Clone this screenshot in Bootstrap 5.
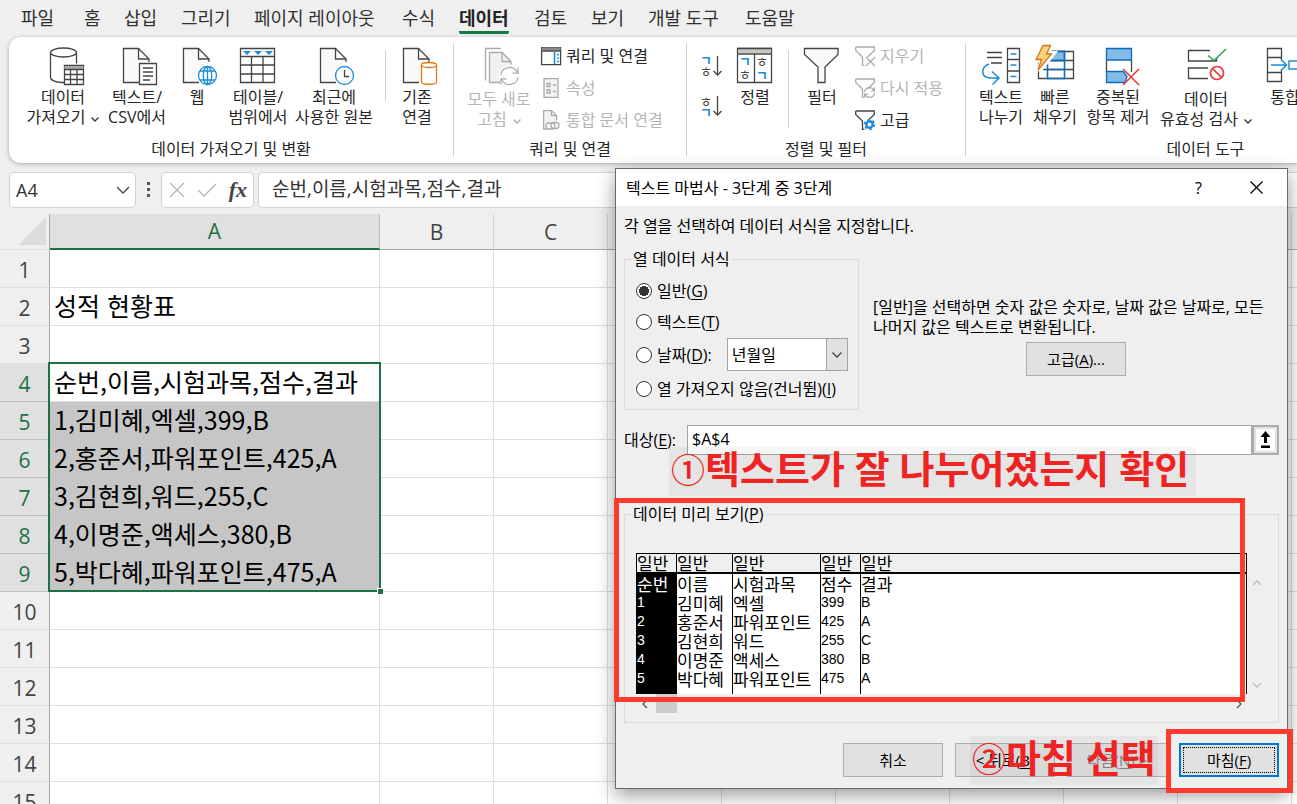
<!DOCTYPE html>
<html lang="ko">
<head>
<meta charset="utf-8">
<meta name="viewport" content="width=device-width, initial-scale=1">
<title>텍스트 마법사</title>
<link href="https://cdn.jsdelivr.net/npm/bootstrap@5.3.0/dist/css/bootstrap.min.css" rel="stylesheet">
<style>
  :root { --chrome: #efefef; --line: #dedede; --green: #1e7145; --mark-red: #ff3b30; }
  body { font-family: "Open Sans", "Noto Sans CJK KR", sans-serif; font-size: 16px; line-height: 20px; color: #262626; background: var(--chrome); }
  svg { display: block; overflow: visible; fill: none; stroke-width: 1.3; flex: none; }
  button { color: inherit; }
  u { text-underline-offset: 2px; }

  /* menu tabs */
  .tabs { display: grid; grid-template-columns: 63px 40px 57px 73px 148px 57px 75px 57px 57px 97px auto; height: 37px; padding: 6px 0 3px 21px; font-size: 18px; line-height: 25px; }
  .tabs a { color: #303030; text-decoration: none; white-space: nowrap; justify-self: start; border-bottom: 3px solid transparent; }
  .tabs a.on { font-weight: 700; color: #222; border-color: #107c41; border-radius: 2px; }

  /* ribbon */
  .ribbon { height: 126px; margin-left: 9px; background: #fff; border-radius: 12px 0 0 12px; box-shadow: 0 1px 4px rgba(0,0,0,.3); overflow: hidden; padding-top: 6px; padding-bottom: 7px; }
  .grp { flex: none; border-right: 1px solid #d0d0d0; }
  .grp-name { text-align: center; line-height: 14px; }
  .g1 { width: 445px; } .g2 { width: 233px; } .g3 { width: 279px; } .g4 { width: 480px; }
  .big { flex: none; align-self: flex-start; border: 0; background: none; padding: 3px 0 0; white-space: nowrap; line-height: 20px; text-align: center; }
  .big svg { width: 40px; height: 40px; margin: 0 auto 1px; }
  .low { padding-top: 5px; }
  .w44 { width: 44px; } .w54 { width: 54px; } .w66 { width: 66px; } .w70 { width: 70px; } .w82 { width: 82px; }
  .rule { width: 1px; height: 51px; background: #d0d0d0; margin: 7px 9px 0; }
  .rule.tall { height: 78px; margin: 7px 11px 0 1px; }
  .off { color: #b5b5b5; }
  .sm { border: 0; background: none; padding: 0; display: flex; align-items: center; gap: 5px; height: 32px; white-space: nowrap; }
  .lst { margin-top: -3px; }
  .big svg.chev { display: inline-block; width: 8px; height: 8px; margin: 0 0 0 6px; }
  .jamo { font-family: "Noto Sans CJK KR", sans-serif; stroke: none; fill: #444; }
  .jamo.b { fill: #1e8bd8; font-weight: 700; }

  /* formula bar */
  .fbar { height: 51px; padding: 9px 0 6px 9px; }
  .fbox { background: #fff; border: 1px solid #d4d4d4; border-radius: 5px; }
  .namebox { width: 127px; padding: 0 5px 0 6px; }
  .namebox input { border: 0; width: 80px; padding: 0; font-size: 18px; color: #333; }
  .tools { width: 93px; padding: 0 6px 0 7px; }
  .fx { font: italic 700 22px/28px "Liberation Serif", serif; color: #444; }
  .formula { border-right: 0; border-radius: 5px 0 0 5px; padding: 0 13px 2px; font-size: 19px; color: #333; min-width: 0; }

  /* sheet */
  .sheet { overflow: hidden; min-height: 0; }
  .sheet table { table-layout: fixed; width: 1406px; border-collapse: separate; border-spacing: 0; background: #fff; }
  .sheet th { font-weight: 400; text-align: center; font-size: 21px; color: #444; background: var(--chrome); padding: 0; }
  .sheet thead th { height: 35px; line-height: 34px; border-bottom: 1px solid #a8a8a8; border-right: 1px solid #d4d4d4; }
  .sheet thead th:first-child { border-right-color: #a8a8a8; border-bottom-color: var(--line); }
  .sheet thead th.on { background: #e0e0e0; color: var(--green); border-bottom: 2px solid var(--green); border-right-color: #b8b8b8; }
  .sheet tbody th { border-right: 1px solid #a8a8a8; border-bottom: 1px solid var(--line); padding-top: 3px; }
  .sheet tbody th.on { background: #e0e0e0; color: var(--green); border-bottom-color: #c0c0c0; }
  .sheet tbody td { height: 38px; padding: 0 0 2px 4px; line-height: 35px; border-right: 1px solid var(--line); border-bottom: 1px solid var(--line); font-family: "Noto Sans CJK KR", sans-serif; font-size: 25px; color: #000; white-space: nowrap; position: relative; }
  .sheet td.sel { background: #c6c6c6; border-color: #c6c6c6; }
  .corner { width: 27px; height: 27px; margin: 0 3px 0 auto; background: linear-gradient(135deg, transparent 50%, #dcdcdc 50%); }
  .range { position: absolute; z-index: 1; top: -2px; left: -2px; right: -2px; height: 230px; border: 2px solid var(--green); }
  .range::after { content: ""; position: absolute; right: -4px; bottom: -4px; width: 6px; height: 6px; background: var(--green); border: 1px solid #fff; border-width: 1px 0 0 1px; }

  /* wizard window */
  .wizard { position: absolute; z-index: 5; top: 168px; left: 615px; width: 673px; background: var(--chrome); border: 1px solid #6a6a6a; box-shadow: 0 6px 18px rgba(0,0,0,.4); color: #000; }
  .wizard .bar { height: 37px; background: #fff; padding: 0 24px 0 10px; }
  .wizard .bar button { border: 0; background: none; padding: 0; }
  .wiz-body { padding: 10px 8px 11px; }
  .frame { border: 1px solid #dadada; position: relative; margin: 0; }
  .frame legend { float: none; width: auto; margin: 0 0 0 6px; padding: 0 2px; font-size: 16px; line-height: 20px; }
  .fmt { width: 235px; height: 161px; }
  .opts { display: grid; grid-template-rows: 30px 31px 35px 34px; align-items: center; padding-left: 11px; margin-top: 7px; white-space: nowrap; }
  .opts input { appearance: none; width: 16px; height: 16px; margin: 0 5px 0 0; border: 1px solid #333; border-radius: 50%; background: #fff; flex: none; }
  .opts input:checked { background: radial-gradient(circle, #333 0 5px, #fff 5px); }
  .pick { width: 121px; height: 33px; margin-left: 15px; position: relative; }
  .pick select { appearance: none; width: 100%; height: 100%; border: 1px solid #a5a5a5; border-radius: 0; background: #fff; padding: 0 4px; color: #000; }
  .pick span { position: absolute; right: 0; top: 0; bottom: 0; width: 22px; border: 1px solid #a5a5a5; background: #e1e1e1; pointer-events: none; }
  .pb { width: 100px; height: 34px; border: 1px solid #adadad; background: #e1e1e1; padding: 0; font-size: 15px; }
  .pb.main { border: 2px solid #0078d7; outline: 1px dotted #000; outline-offset: -5px; }
  .pb:disabled { color: #888; }
  .hint { margin-left: 14px; width: 406px; white-space: nowrap; }
  .dest { height: 30px; }
  .dest label { width: 63px; }
  .dest input { border: 1px solid #a5a5a5; background: #fff; padding: 0 4px 2px; min-width: 0; color: #000; }
  .dest button { width: 27px; border: 2px solid #adadad; background: #e1e1e1; padding: 2px; }
  .dest svg { background: #fff; }
  .prev { height: 219px; }
  .prev-in { padding: 29px 11px 0; }
  .prev table { table-layout: fixed; width: 100%; border: 1px solid #000; border-bottom: 0; border-collapse: separate; border-spacing: 0; background: #fff; font: 17px/19px "Noto Sans CJK KR", sans-serif; }
  .prev th, .prev td { padding: 0; height: 19px; font-weight: 400; border-left: 1px solid #000; white-space: nowrap; }
  .prev th { background: var(--chrome); border-bottom: 2px solid #000; line-height: 18px; height: 20px; }
  .prev th:first-child, .prev td:first-child { border-left: 0; }
  .prev tbody td:first-child { background: #000; color: #fff; }
  .prev tbody tr:last-child td { height: 25px; vertical-align: top; }
  .prev .lat { font-family: "Liberation Sans", sans-serif; font-size: 14px; }
  .vbar { width: 20px; padding: 26px 0 5px; }
  .hbar { height: 19px; margin-right: 20px; padding: 0 4px 0 5px; }
  .hbar i { width: 21px; height: 19px; background: #cdcdcd; margin-left: 8px; }

  /* red call-outs over the window */
  .ring { position: absolute; border: 5px solid var(--mark-red); pointer-events: none; }
  .ring.a { left: -2px; top: 329px; width: 631px; height: 204px; }
  .ring.b { left: 550px; top: 560px; width: 127px; height: 64px; }
  .note { position: absolute; height: 49px; padding: 0 2px; background: rgba(0,0,0,.04); color: #f02323; font-weight: 700; font-size: 38px; line-height: 42px; white-space: nowrap; }
  .note span { font-size: 34px; font-weight: 500; }
  .note.a { left: 53px; top: 278px; width: 527px; }
  .note.b { left: 354px; top: 567px; width: 188px; }
</style>
</head>
<body class="vh-100 overflow-hidden d-flex flex-column position-relative">

<svg width="0" height="0" class="position-absolute" aria-hidden="true">
  <symbol id="page" viewBox="0 0 40 40" overflow="visible"><path d="M22 36.500H6.500v-34H21.500L32 13v3" fill="#fafafa"/><path d="M21.500 2.500V13H32"/></symbol>
  <symbol id="chev" viewBox="0 0 8 8"><path d="M.5 2.500L4 6l3.500-3.500"/></symbol>
  <symbol id="funnel" viewBox="0 0 20 20"><path d="M.7 1h18.600v3.500L12.500 11M.7 1v3.500L7.500 11v8.500h2"/></symbol>
  <symbol id="spin" viewBox="0 0 20 20"><path d="M1 9a9 9 0 0 1 17-3M19 1v6h-6M19 11a9 9 0 0 1-17 3M1 19v-6h6"/></symbol>
</svg>

<nav class="tabs flex-shrink-0">
  <a href="#">파일</a><a href="#">홈</a><a href="#">삽입</a><a href="#">그리기</a><a href="#">페이지 레이아웃</a><a href="#">수식</a><a href="#" class="on">데이터</a><a href="#">검토</a><a href="#">보기</a><a href="#">개발 도구</a><a href="#">도움말</a>
</nav>

<div class="ribbon d-flex flex-shrink-0">
  <section class="grp g1 d-flex flex-column justify-content-between">
    <div class="d-flex" style="padding-left:13px">
      <button class="big w82"><svg stroke="#444"><path d="M7.500 6.500v25c0 2.500 5 4.500 11 5h3M33.500 6.500v11M7.500 6.500a13 4.500 0 0 0 26 0a13 4.500 0 0 0-26 0"/><path d="M21.500 19.500h19v19h-19z" fill="#fff"/><path d="M21.500 21.500h19" stroke="#aaa" stroke-width="3"/><path d="M21.500 23.500h19M21.500 28.500h19M21.500 33.500h19M27.500 23.500v15M34 23.500v15"/></svg>데이터<br>가져오기<svg class="chev" stroke="#333"><use href="#chev"/></svg></button>
      <button class="big w66"><svg stroke="#444"><use href="#page" width="40" height="40"/><path d="M22.500 17.500h17v21h-17z" fill="#fff"/><path d="M26 22h10M26 26h10M26 30h10M26 34h7"/></svg>텍스트/<br>CSV에서</button>
      <button class="big w54"><svg stroke="#444"><use href="#page" width="40" height="40"/><g stroke="#1e8bd8"><circle cx="30.500" cy="29.500" r="9" fill="#fff"/><ellipse cx="30.500" cy="29.500" rx="4.200" ry="9"/><path d="M30.500 20.500v18M23 25h15M23 34h15"/></g></svg>웹</button>
      <button class="big" style="width:68px"><svg stroke="#444"><path d="M2.500 2.500h34v34h-34zM2.500 10.500h34M2.500 19h34M2.500 28h34M13.500 10.500v26M25 10.500v26"/><path fill="#1e8bd8" stroke="none" d="M5 5h8l-4 4zM16 5h8l-4 4zM27 5h8l-4 4z"/></svg>테이블/<br>범위에서</button>
      <button class="big" style="width:84px"><svg stroke="#444"><use href="#page" width="40" height="40"/><circle cx="30.500" cy="29.500" r="9" fill="#fff" stroke="#1e8bd8"/><path d="M30.500 24v6.500h4.500"/></svg>최근에<br>사용한 원본</button>
      <div class="rule"></div>
      <button class="big w44"><svg stroke="#444" style="margin-left:2px"><use href="#page" width="40" height="40"/><path d="M24.500 19v17c0 3 15 3 15 0V19" fill="#fff" stroke="#e07a10"/><ellipse cx="32" cy="19" rx="7.500" ry="2.500" fill="#fff" stroke="#e07a10"/></svg>기존<br>연결</button>
    </div>
    <div class="grp-name">데이터 가져오기 및 변환</div>
  </section>

  <section class="grp g2 d-flex flex-column justify-content-between">
    <div class="d-flex" style="padding-left:10px">
      <button class="big w70 low off" disabled><svg stroke="#aaa"><path d="M22 .5H6.500v32"/><path d="M21 34.500H10.500v-30H23l9 9v3" fill="#f1f1f1"/><path d="M23 4.500v9h9"/><circle cx="31" cy="28" r="11" fill="#fff" stroke="none"/><use href="#spin" x="21" y="18" width="19" height="20"/></svg>모두 새로<br>고침<svg class="chev" stroke="#aaa"><use href="#chev"/></svg></button>
      <div class="lst" style="margin-left:7px">
        <button class="sm"><svg width="20" height="20" stroke="#444"><path d="M.6 1.600h19v17H.6z"/><path d="M.6 3h19" stroke-width="3" stroke="#888"/><path d="M.6 5h19"/><path d="M13.500 6v12M16 8.500h2M16 12h2M16 15.500h2" stroke="#1e8bd8" stroke-width="1.600"/></svg>쿼리 및 연결</button>
        <button class="sm off" disabled><svg width="20" height="20" stroke="#aaa"><path d="M3 .6h14v18.800H3z" fill="#f3f3f3"/><path d="M6 5.500h3v3H6zM6 12h3v3H6zM12 7h3M12 13.500h3"/></svg>속성</button>
        <button class="sm off" disabled><svg width="20" height="20" stroke="#aaa"><path d="M7 19H2.600V.6h8l5 5v5" fill="#f3f3f3"/><path d="M10.500.6v5h5"/><rect x="5" y="13" width="9" height="6" rx="3" fill="#fff"/><rect x="10" y="12.500" width="8" height="6" rx="3"/></svg>통합 문서 연결</button>
      </div>
    </div>
    <div class="grp-name">쿼리 및 연결</div>
  </section>

  <section class="grp g3 d-flex flex-column justify-content-between">
    <div class="d-flex" style="padding-left:14px">
      <div class="d-flex flex-column" style="padding-top:13px;gap:20px">
        <button class="sm" style="height:20px" aria-label="오름차순"><svg width="22" height="20" stroke="#444"><text class="jamo b" x="-1" y="9" font-size="13">ㄱ</text><text class="jamo" x="-1" y="20" font-size="13">ㅎ</text><path d="M16.500 0v19M12.500 15l4 4 4-4"/></svg></button>
        <button class="sm" style="height:20px" aria-label="내림차순"><svg width="22" height="20" stroke="#444"><text class="jamo" x="-1" y="10" font-size="13">ㅎ</text><text class="jamo b" x="-1" y="21" font-size="13">ㄱ</text><path d="M16.500 0v19M12.500 15l4 4 4-4"/></svg></button>
      </div>
      <button class="big" style="width:64px"><svg stroke="#444"><path d="M2.500 2.500h34v34h-34zM19.500 8v28"/><path d="M3 5h33" stroke="#c8c6c0" stroke-width="4"/><path d="M2.500 8h34M2.500 2.500h34"/><text class="jamo b" x="4" y="20" font-size="13">ㄱ</text><text class="jamo" x="4" y="33" font-size="13">ㅎ</text><text class="jamo" x="21" y="20" font-size="13">ㅎ</text><text class="jamo b" x="21" y="34" font-size="13">ㄱ</text></svg>정렬</button>
      <div class="rule tall"></div>
      <button class="big w44"><svg stroke="#444" style="margin-left:2px"><path d="M2.500 2.500h33.500v6L23 21v15.500h-7V21L2.500 8.500z" fill="#fafafa"/></svg>필터</button>
      <div class="lst" style="margin-left:11px">
        <button class="sm off" disabled><svg width="20" height="20" stroke="#aaa"><use href="#funnel" width="20" height="20"/><path d="M11 11l9 9M20 11l-9 9"/></svg>지우기</button>
        <button class="sm off" disabled><svg width="20" height="20" stroke="#aaa"><use href="#funnel" width="20" height="20"/><use href="#spin" x="9" y="9" width="11" height="11" stroke-width="2.200"/></svg>다시 적용</button>
        <button class="sm"><svg width="20" height="20" stroke="#444"><use href="#funnel" width="20" height="20"/><circle cx="14.500" cy="14.500" r="3.200" stroke="#1e8bd8" stroke-width="2.400"/><circle cx="14.500" cy="14.500" r="4.800" stroke="#1e8bd8" stroke-width="1.800" stroke-dasharray="2.500 2.530"/></svg>고급</button>
      </div>
    </div>
    <div class="grp-name">정렬 및 필터</div>
  </section>

  <section class="grp g4 d-flex flex-column justify-content-between">
    <div class="d-flex" style="padding-left:8px">
      <button class="big w54"><svg stroke="#444" style="margin-left:7px"><path d="M6 6.500h15M6 11.500h15M10 17h11M26.500 2.500h12v34h-12zM26.500 13.500h12M26.500 25h12"/><path d="M8 18c-8 3-9 13 1 14h9M11 25.500l7 6.500-6.500 6.500M29.500 8h6M29.500 19h6M29.500 30.500h6" stroke="#1e8bd8" stroke-width="1.500"/></svg>텍스트<br>나누기</button>
      <button class="big w54"><svg stroke="#444" style="margin-left:7px"><path d="M3.500 5.500h35v27h-35zM3.500 14.500h35M3.500 23.500h35"/><path d="M12.500 5.500h17v9h-17z" fill="#83bbe9"/><path d="M12.500 5.500h17v27h-17zM12.500 14.500h17M12.500 23.500h17" stroke="#0f6cbd" stroke-width="1.600"/><path d="M8-.5h8l-3.500 8H18L4 25l3-11H.5z" stroke="#fff" stroke-width="5" fill="#fff"/><path d="M8-.5h7.500L11.500 8h5L3 24l3.500-10.500H1z" fill="#fbd27c" stroke="#d9741a"/></svg>빠른<br>채우기</button>
      <button class="big" style="width:72px"><svg stroke="#0f6cbd"><path d="M8.500 14v12M33.500 14v12" stroke="#444"/><path d="M8.500 2.500h25v11.500h-25zM27 36.500H8.500V25.500H25l4 5z" fill="#83bbe9"/><path d="M25 23l16 16M41 23L25 39" stroke="#e8393d" stroke-width="1.600"/></svg>중복된<br>항목 제거</button>
      <button class="big low" style="width:104px"><svg stroke="#444"><path d="M24 2.500H2.500v10.500h28v-3M22 20H2.500v10.500H22"/><path d="M22 7.500l6 5L40 1" stroke="#2f9e4f" stroke-width="1.600"/><circle cx="31" cy="25" r="6.500" fill="#fff" stroke="#e8393d" stroke-width="1.700"/><path d="M26.500 20.500l9 9" stroke="#e8393d" stroke-width="1.700"/></svg>데이터<br>유효성 검사<svg class="chev" stroke="#333"><use href="#chev"/></svg></button>
      <button class="big w54"><svg stroke="#444" style="margin-left:7px"><path d="M2.500 2.500h14v9h-14zM2.500 11.500v15M16.500 11.500v3M16.500 23v3M2.500 26.500h14v9h-14z"/><path d="M6 19h15M16 13.500l5.500 5.500-5.500 5.500M24 15h14v8H24z" stroke="#1e8bd8" stroke-width="1.500"/></svg>통합</button>
    </div>
    <div class="grp-name">데이터 도구</div>
  </section>
</div>

<div class="fbar d-flex flex-shrink-0">
  <div class="fbox namebox d-flex align-items-center justify-content-between"><input aria-label="이름 상자" value="A4"><svg width="14" height="8" stroke="#444" stroke-width="1.500"><path d="M1 1l6 6 6-6"/></svg></div>
  <svg width="25" height="36"><path fill="#555" d="M11 10h3v3h-3zM11 16h3v3h-3zM11 22h3v3h-3z"/></svg>
  <div class="fbox tools d-flex align-items-center justify-content-between">
    <svg width="16" height="16" stroke="#b5b5b5"><path d="M1 1l14 14M15 1L1 15"/></svg>
    <svg width="20" height="14" stroke="#b5b5b5"><path d="M1 7l6 6L19 1"/></svg>
    <span class="fx">fx</span>
  </div>
  <input class="fbox formula flex-grow-1 ms-1" aria-label="수식 입력줄" value="순번,이름,시험과목,점수,결과">
</div>

<main class="sheet flex-grow-1">
  <table>
    <colgroup><col style="width:50px"><col style="width:330px"><col span="9"></colgroup>
    <thead><tr><th><div class="corner"></div></th><th class="on">A</th><th>B</th><th>C</th><th>D</th><th>E</th><th>F</th><th>G</th><th>H</th><th>I</th><th>J</th></tr></thead>
    <tbody>
      <tr><th>1</th><td></td><td></td><td></td><td></td><td></td><td></td><td></td><td></td><td></td><td></td></tr>
      <tr><th>2</th><td>성적 현황표</td><td></td><td></td><td></td><td></td><td></td><td></td><td></td><td></td><td></td></tr>
      <tr><th>3</th><td></td><td></td><td></td><td></td><td></td><td></td><td></td><td></td><td></td><td></td></tr>
      <tr><th class="on">4</th><td>순번,이름,시험과목,점수,결과<div class="range"></div></td><td></td><td></td><td></td><td></td><td></td><td></td><td></td><td></td><td></td></tr>
      <tr><th class="on">5</th><td class="sel">1,김미혜,엑셀,399,B</td><td></td><td></td><td></td><td></td><td></td><td></td><td></td><td></td><td></td></tr>
      <tr><th class="on">6</th><td class="sel">2,홍준서,파워포인트,425,A</td><td></td><td></td><td></td><td></td><td></td><td></td><td></td><td></td><td></td></tr>
      <tr><th class="on">7</th><td class="sel">3,김현희,워드,255,C</td><td></td><td></td><td></td><td></td><td></td><td></td><td></td><td></td><td></td></tr>
      <tr><th class="on">8</th><td class="sel">4,이명준,액세스,380,B</td><td></td><td></td><td></td><td></td><td></td><td></td><td></td><td></td><td></td></tr>
      <tr><th class="on">9</th><td class="sel">5,박다혜,파워포인트,475,A</td><td></td><td></td><td></td><td></td><td></td><td></td><td></td><td></td><td></td></tr>
      <tr><th>10</th><td></td><td></td><td></td><td></td><td></td><td></td><td></td><td></td><td></td><td></td></tr>
      <tr><th>11</th><td></td><td></td><td></td><td></td><td></td><td></td><td></td><td></td><td></td><td></td></tr>
      <tr><th>12</th><td></td><td></td><td></td><td></td><td></td><td></td><td></td><td></td><td></td><td></td></tr>
      <tr><th>13</th><td></td><td></td><td></td><td></td><td></td><td></td><td></td><td></td><td></td><td></td></tr>
      <tr><th>14</th><td></td><td></td><td></td><td></td><td></td><td></td><td></td><td></td><td></td><td></td></tr>
      <tr><th>15</th><td></td><td></td><td></td><td></td><td></td><td></td><td></td><td></td><td></td><td></td></tr>
    </tbody>
  </table>
</main>

<div class="wizard" role="dialog" aria-label="텍스트 마법사">
  <div class="bar d-flex align-items-center">
    <span class="me-auto">텍스트 마법사 - 3단계 중 3단계</span>
    <button aria-label="도움말">?</button>
    <button class="ms-5" aria-label="닫기"><svg width="13" height="13" stroke="#000"><path d="M.5.5l12 12M12.500.5l-12 12"/></svg></button>
  </div>
  <div class="wiz-body">
    <p class="mb-0">각 열을 선택하여 데이터 서식을 지정합니다.</p>
    <div class="d-flex" style="margin-top:13px">
      <fieldset class="frame fmt">
        <legend>열 데이터 서식</legend>
        <div class="opts">
          <label class="d-flex align-items-center"><input type="radio" name="fmt" checked>일반(<u>G</u>)</label>
          <label class="d-flex align-items-center"><input type="radio" name="fmt">텍스트(<u>T</u>)</label>
          <div class="d-flex align-items-center"><label class="d-flex align-items-center"><input type="radio" name="fmt">날짜(<u>D</u>):</label>
            <div class="pick"><select aria-label="날짜 형식"><option>년월일</option></select><span class="d-flex align-items-center justify-content-center"><svg width="10" height="6" stroke="#444"><path d="M.5.500L5 5 9.500.5"/></svg></span></div></div>
          <label class="d-flex align-items-center"><input type="radio" name="fmt">열 가져오지 않음(건너뜀)(<u>I</u>)</label>
        </div>
      </fieldset>
      <div class="hint d-flex flex-column align-items-center" style="padding-top:48px">
        <div class="w-100">[일반]을 선택하면 숫자 값은 숫자로, 날짜 값은 날짜로, 모든<br>나머지 값은 텍스트로 변환됩니다.</div>
        <button class="pb" style="margin-top:5px">고급(<u>A</u>)...</button>
      </div>
    </div>
    <div class="dest d-flex" style="margin-top:15px">
      <label for="dest" class="align-self-center">대상(<u>E</u>):</label>
      <input id="dest" class="flex-grow-1" value="$A$4">
      <button aria-label="범위 선택"><svg width="19" height="22"><path fill="#000" d="M9.500 2l5 6h-3.500v6H8V8H4.500zM5 16.500h9v2.500H5z"/></svg></button>
    </div>
    <fieldset class="frame prev" style="margin-top:49px">
      <legend>데이터 미리 보기(<u>P</u>)</legend>
      <div class="prev-in">
        <div class="d-flex">
          <table>
            <colgroup><col style="width:39px"><col style="width:56px"><col style="width:88px"><col style="width:40px"><col></colgroup>
            <thead><tr><th>일반</th><th>일반</th><th>일반</th><th>일반</th><th>일반</th></tr></thead>
            <tbody>
              <tr><td>순번</td><td>이름</td><td>시험과목</td><td>점수</td><td>결과</td></tr>
              <tr><td class="lat">1</td><td>김미혜</td><td>엑셀</td><td class="lat">399</td><td class="lat">B</td></tr>
              <tr><td class="lat">2</td><td>홍준서</td><td>파워포인트</td><td class="lat">425</td><td class="lat">A</td></tr>
              <tr><td class="lat">3</td><td>김현희</td><td>워드</td><td class="lat">255</td><td class="lat">C</td></tr>
              <tr><td class="lat">4</td><td>이명준</td><td>액세스</td><td class="lat">380</td><td class="lat">B</td></tr>
              <tr><td class="lat">5</td><td>박다혜</td><td>파워포인트</td><td class="lat">475</td><td class="lat">A</td></tr>
            </tbody>
          </table>
          <div class="vbar d-flex flex-column justify-content-between align-items-center flex-shrink-0">
            <svg width="10" height="7" stroke="#bbb" stroke-width="2"><path d="M1 6l4-4 4 4"/></svg>
            <svg width="10" height="7" stroke="#bbb" stroke-width="2"><path d="M1 1l4 4 4-4"/></svg>
          </div>
        </div>
        <div class="hbar d-flex align-items-center">
          <svg width="7" height="10" stroke="#555" stroke-width="2"><path d="M6 1L2 5l4 4"/></svg><i></i>
          <svg class="ms-auto" width="7" height="10" stroke="#555" stroke-width="2"><path d="M1 1l4 4-4 4"/></svg>
        </div>
      </div>
    </fieldset>
    <div class="d-flex justify-content-end" style="margin-top:20px;gap:12px">
      <button class="pb">취소</button>
      <button class="pb">&lt; 뒤로(<u>B</u>)</button>
      <button class="pb" disabled>다음(<u>N</u>) &gt;</button>
      <button class="pb main">마침(<u>F</u>)</button>
    </div>
  </div>
  <div class="note a"><span>①</span>텍스트가 잘 나누어졌는지 확인</div>
  <div class="note b"><span>②</span>마침 선택</div>
  <div class="ring a"></div>
  <div class="ring b"></div>
</div>

<script src="https://cdn.jsdelivr.net/npm/bootstrap@5.3.0/dist/js/bootstrap.bundle.min.js"></script>
</body>
</html>
